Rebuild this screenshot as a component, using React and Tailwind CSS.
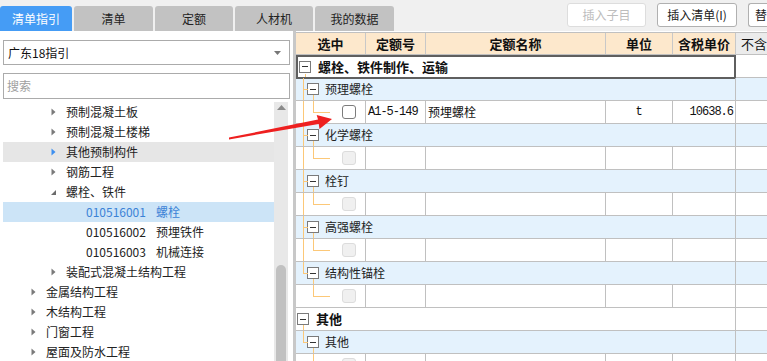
import React from "react";

const CJK = "font-['Noto_Sans_CJK_SC','Noto_Sans',sans-serif]";

const tabs = [
  { label: "清单指引", w: "w-[72px]", active: true },
  { label: "清单", w: "w-[79px]" },
  { label: "定额", w: "w-[78px]" },
  { label: "人材机", w: "w-[78px]" },
  { label: "我的数据", w: "w-[79px]" },
];

const treeItems = [
  { level: 2, text: "预制混凝土板", tri: "right" },
  { level: 2, text: "预制混凝土楼梯", tri: "right" },
  { level: 2, text: "其他预制构件", tri: "right", hover: true },
  { level: 2, text: "钢筋工程", tri: "right" },
  { level: 2, text: "螺栓、铁件", tri: "down" },
  { level: 3, code: "010516001", text: "螺栓", selected: true },
  { level: 3, code: "010516002", text: "预埋铁件" },
  { level: 3, code: "010516003", text: "机械连接" },
  { level: 2, text: "装配式混凝土结构工程", tri: "right" },
  { level: 1, text: "金属结构工程", tri: "right" },
  { level: 1, text: "木结构工程", tri: "right" },
  { level: 1, text: "门窗工程", tri: "right" },
  { level: 1, text: "屋面及防水工程", tri: "right" },
];

function Tri({ dir, blue }) {
  if (dir === "down") {
    return (
      <svg width="7" height="7" viewBox="0 0 7 7" className="shrink-0">
        <polygon points="6,1 6,6 1,6" fill="#6b6b6b" />
      </svg>
    );
  }
  return (
    <svg width="7" height="8" viewBox="0 0 7 8" className="shrink-0">
      <polygon points="1.5,0.5 5.5,4 1.5,7.5" fill={blue ? "#3d8ff0" : "#7a7a7a"} />
    </svg>
  );
}

function TreeRow({ item }) {
  const pad = item.level === 1 ? "pl-[27px]" : item.level === 2 ? "pl-[47px]" : "pl-[83px]";
  let bg = "";
  if (item.hover) bg = "bg-[#e6e6e6]";
  if (item.selected) bg = "bg-[#cce4f7]";
  return (
    <div className={`h-[20px] flex items-center ${pad} ${bg}`}>
      {item.tri && <Tri dir={item.tri} blue={item.hover} />}
      {item.tri && <span className="w-[9px]" />}
      {item.code ? (
        <span className={item.selected ? "text-[#3b82d6]" : "text-[#222]"}>
          {item.code}
          <span className="ml-[10px]">{item.text}</span>
        </span>
      ) : (
        <span className="text-[#222]">{item.text}</span>
      )}
    </div>
  );
}

function MinusBox() {
  return (
    <div className="w-[12px] h-[12px] border border-[#7a7a7a] bg-white flex items-center justify-center shrink-0">
      <div className="w-[6px] h-[1px] bg-[#333]" />
    </div>
  );
}

const LINE = "bg-[#fcc878]";

// kind: g1 (level-1 group), g2 (level-2 group), data
const rows = [
  { kind: "g1", text: "螺栓、铁件制作、运输", framed: true },
  { kind: "g2", text: "预理螺栓", trunk: "full" },
  { kind: "data", trunk: "full", enabled: true, code: "A1-5-149", name: "预埋螺栓", unit: "t", price: "10638.6" },
  { kind: "g2", text: "化学螺栓", trunk: "full" },
  { kind: "data", trunk: "full" },
  { kind: "g2", text: "栓钉", trunk: "full" },
  { kind: "data", trunk: "full" },
  { kind: "g2", text: "高强螺栓", trunk: "full" },
  { kind: "data", trunk: "full" },
  { kind: "g2", text: "结构性锚栓", trunk: "half" },
  { kind: "data", trunk: "none" },
  { kind: "g1", text: "其他" },
  { kind: "g2", text: "其他", trunk: "half" },
  { kind: "data", trunk: "none" },
];

function Trunk({ trunk }) {
  if (trunk === "full") return <div className={`absolute left-[7px] top-0 bottom-0 w-[1px] ${LINE}`} />;
  if (trunk === "half") return <div className={`absolute left-[7px] top-0 h-[12px] w-[1px] ${LINE}`} />;
  return null;
}

function GridRow({ row }) {
  if (row.kind === "g1") {
    return (
      <div className="grid grid-cols-[440px_1fr] h-[23px] bg-white border-b border-[#c0c0c0]">
        <div
          className={`relative flex items-center pl-[1px] ${
            row.framed ? "border-2 border-[#5f5f5f] -mb-[1px]" : "border-r border-[#c0c0c0]"
          }`}
        >
          <div className={`absolute left-[7px] top-[17px] bottom-0 w-[1px] ${LINE}`} />
          <MinusBox />
          <span className="ml-[7px] text-[13px] font-bold text-[#111]">{row.text}</span>
        </div>
        <div />
      </div>
    );
  }
  if (row.kind === "g2") {
    return (
      <div className="grid grid-cols-[440px_1fr] h-[23px] bg-[#e4f2fd] border-b border-[#c0c0c0]">
        <div className="relative flex items-center pl-[11px] border-r border-[#c0c0c0]">
          <Trunk trunk={row.trunk} />
          <div className={`absolute left-[7px] top-[11px] w-[5px] h-[1px] ${LINE}`} />
          <div className={`absolute left-[17px] top-[17px] bottom-0 w-[1px] ${LINE}`} />
          <MinusBox />
          <span className="ml-[6px] text-[12px] text-[#222]">{row.text}</span>
        </div>
        <div />
      </div>
    );
  }
  return (
    <div className="grid grid-cols-[70px_60px_180px_67px_63px_1fr] h-[23px] bg-white border-b border-[#c0c0c0]">
      <div className="relative border-r border-[#c0c0c0]">
        <Trunk trunk={row.trunk} />
        <div className={`absolute left-[17px] top-0 h-[12px] w-[1px] ${LINE}`} />
        <div className={`absolute left-[17px] top-[11px] w-[17px] h-[1px] ${LINE}`} />
        <div
          className={`absolute left-[46px] top-[4px] w-[14px] h-[14px] rounded-[3px] border ${
            row.enabled ? "border-[#7c7c7c] bg-white" : "border-[#dcdcdc] bg-[#f0f0f0]"
          }`}
        />
      </div>
      <div className="border-r border-[#c0c0c0] flex items-center pl-[2px] font-['Liberation_Mono',monospace] text-[12px] tracking-[-1px] text-[#111]">
        {row.code}
      </div>
      <div className="border-r border-[#c0c0c0] flex items-center pl-[2px] text-[12px] text-[#111]">{row.name}</div>
      <div className="border-r border-[#c0c0c0] flex items-center justify-center font-['Liberation_Mono',monospace] text-[12px] text-[#111]">
        {row.unit}
      </div>
      <div className="border-r border-[#c0c0c0] flex items-center justify-end pr-[2px] font-['Liberation_Mono',monospace] text-[12px] tracking-[-1px] text-[#111]">
        {row.price}
      </div>
      <div />
    </div>
  );
}

export default function App() {
  return (
    <div className={`relative w-[767px] h-[361px] overflow-hidden bg-[#f0f0f0] flex flex-col text-[12px] ${CJK}`}>
      {/* top bar */}
      <div className="h-[31px] flex shrink-0 overflow-hidden">
        <div className="flex items-end gap-[2px] shrink-0">
          {tabs.map((t) => (
            <div
              key={t.label}
              className={`${t.w} h-[25px] rounded-t-[3px] flex items-center justify-center text-[12px] ${
                t.active ? "bg-[#459cf5] text-white" : "bg-[#c2c2c2] text-[#222]"
              }`}
            >
              {t.label}
            </div>
          ))}
        </div>
        <div className="w-[173px] shrink-0" />
        <div className="flex items-start pt-[3px] gap-[11px] shrink-0">
          <div className="w-[79px] h-[24px] rounded-[3px] border border-[#dddddd] bg-white text-[#bdbdbd] flex items-center justify-center">
            插入子目
          </div>
          <div className="w-[80px] h-[24px] rounded-[3px] border border-[#b0b0b0] bg-white text-[#222] flex items-center justify-center">
            插入清单(I)
          </div>
          <div className="w-[23px] h-[24px] rounded-l-[3px] border border-r-0 border-[#b0b0b0] bg-white text-[#222] flex items-center pl-[6px]">
            替
          </div>
        </div>
      </div>

      {/* main */}
      <div className="flex flex-1 min-h-0">
        {/* left panel */}
        <div className="w-[293px] bg-white flex flex-col px-[3px] shrink-0">
          <div className="mt-[9px] h-[25px] border border-[#ababab] flex items-center pl-[4px] pr-[8px] text-[#111]">
            <span className="flex-1">广东18指引</span>
            <svg width="7" height="4" viewBox="0 0 7 4">
              <polygon points="0,0 7,0 3.5,4" fill="#777" />
            </svg>
          </div>
          <div className="mt-[8px] h-[26px] border border-[#ababab] flex items-center pl-[3px] text-[#a0a0a0]">搜索</div>
          <div className="flex flex-1 min-h-0 mt-[3px]">
            <div className="w-[271px] overflow-hidden">
              {treeItems.map((it, i) => (
                <TreeRow key={i} item={it} />
              ))}
            </div>
            <div className="w-[14px] bg-[#e8e8e8] flex flex-col items-center">
              <svg width="9" height="6" viewBox="0 0 9 6" className="mt-[3px]">
                <polygon points="0,5 9,5 4.5,0" fill="#8a8a8a" />
              </svg>
              <div className="flex-1" />
              <div className="w-[10px] h-[96px] rounded-t-[5px] bg-[#c1c1c1]" />
            </div>
          </div>
        </div>
        <div className="w-[3px] bg-[#c8c8c8] shrink-0" />

        {/* right grid */}
        <div className="flex-1 bg-white pt-[1px] overflow-hidden">
          <div className="grid grid-cols-[70px_60px_180px_67px_63px_1fr] h-[23px] border-t border-b border-[#c0c0c0] text-[13px] font-bold text-[#111]">
            <div className="bg-[#fde8cc] border-r border-[#c8c8c8] flex items-center justify-center">选中</div>
            <div className="bg-[#fde8cc] border-r border-[#c8c8c8] flex items-center justify-center">定额号</div>
            <div className="bg-[#fde8cc] border-r border-[#c8c8c8] flex items-center justify-center">定额名称</div>
            <div className="bg-[#fde8cc] border-r border-[#c8c8c8] flex items-center justify-center">单位</div>
            <div className="bg-[#fde8cc] border-r border-[#c8c8c8] flex items-center justify-center">含税单价</div>
            <div className="bg-[#ebebeb] flex items-center pl-[5px] font-normal whitespace-nowrap overflow-hidden">不含</div>
          </div>
          {rows.map((r, i) => (
            <GridRow key={i} row={r} />
          ))}
        </div>
      </div>

      {/* red annotation arrow */}
      <svg className="absolute left-0 top-0 pointer-events-none" width="767" height="361">
        <polygon
          points="229,137.6 318,119.6 316.7,115 332,119 319.5,129 318.7,124 229,139.4"
          fill="#ee2020"
        />
      </svg>
    </div>
  );
}
